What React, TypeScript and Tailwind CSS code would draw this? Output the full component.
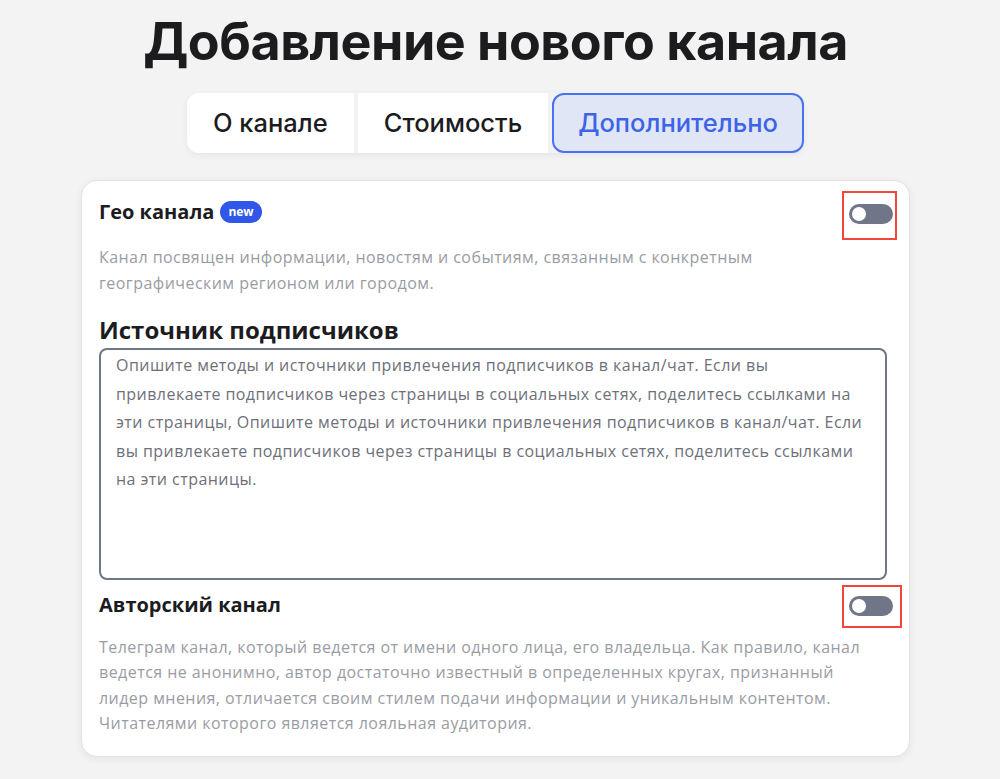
import React from "react";

// red outline around the switch is part of the screenshot, paddings differ per box
const Toggle: React.FC<{ pad: string }> = ({ pad }) => (
  <div className={`border-2 border-[#f0463c] ${pad}`}>
    <div className="w-[44px] h-[20px] rounded-full bg-[#6e7687] flex items-center px-[3px]">
      <div className="w-[14px] h-[14px] rounded-full bg-white" />
    </div>
  </div>
);

const tabs = [
  { label: "О канале", active: false },
  { label: "Стоимость", active: false },
  { label: "Дополнительно", active: true },
];

export default function App() {
  return (
    <div className="min-h-[779px] bg-[#f3f3f4] font-['Open_Sans',sans-serif] flex flex-col items-center pr-[9px]">
      <h1 className="mt-[10px] text-[52px] leading-[64px] font-bold tracking-[-0.5px] text-[#1c1c1f] font-['Inter',sans-serif]">
        Добавление нового канала
      </h1>

      <div className="mt-[19px] flex gap-[4px] rounded-[12px] shadow-[0_2px_6px_rgba(0,0,0,0.06)] font-['Inter',sans-serif]">
        {tabs.map((t, i) => (
          <div
            key={t.label}
            className={`h-[60px] flex items-center text-[25.5px] font-medium ${
              t.active
                ? "bg-[#e1e6f6] border-2 border-[#4a72f0] text-[#3d63e6] rounded-[12px] px-[24px]"
                : `bg-white text-[#1c1c1f] px-[26px] ${i === 0 ? "rounded-l-[12px]" : ""}`
            }`}
          >
            {t.label}
          </div>
        ))}
      </div>

      <div className="mt-[27px] w-[829px] bg-white border border-[#e3e3e6] rounded-[16px] shadow-[0_2px_8px_rgba(0,0,0,0.06)] pl-[17px] pr-[7px] pt-[10px] pb-[20px]">
        <div className="flex items-start justify-between">
          <div className="flex items-center gap-[6px] pt-[9px]">
            <span className="text-[20px] leading-[24px] font-bold text-[#1c1c1f]">Гео канала</span>
            <span className="bg-[#3157e8] text-white text-[12px] font-bold rounded-full px-[8px] leading-[22px]">new</span>
          </div>
          <div className="mr-[5px]">
            <Toggle pad="pl-[5px] pr-[2px] pt-[11px] pb-[14px]" />
          </div>
        </div>
        <p className="mt-[4px] w-[768px] text-[16px] leading-[26px] tracking-[0.45px] text-[#9a9ca4]">
          Канал посвящен информации, новостям и событиям, связанным с конкретным географическим регионом или городом.
        </p>

        <h2 className="mt-[19px] text-[24px] leading-[30px] font-bold text-[#1c1c1f]">Источник подписчиков</h2>
        <div className="mt-[3px] mr-[15px] h-[232px] border-2 border-[#6e7687] rounded-[8px] pl-[15px] pr-[14px] pt-[1px] text-[16px] leading-[28.5px] tracking-[0.45px] text-[#6e7079]">
          Опишите методы и источники привлечения подписчиков в канал/чат. Если вы привлекаете подписчиков через страницы в социальных сетях, поделитесь ссылками на эти страницы, Опишите методы и источники привлечения подписчиков в канал/чат. Если вы привлекаете подписчиков через страницы в социальных сетях, поделитесь ссылками на эти страницы.
        </div>

        <div className="mt-[5px] flex items-start justify-between">
          <span className="pt-[8px] text-[20px] leading-[24px] font-bold text-[#1c1c1f]">Авторский канал</span>
          <Toggle pad="pl-[5px] pr-[7px] pt-[9px] pb-[10px]" />
        </div>
        <p className="mt-[7px] w-[768px] text-[16px] leading-[25.3px] tracking-[0.45px] text-[#9a9ca4]">
          Телеграм канал, который ведется от имени одного лица, его владельца. Как правило, канал ведется не анонимно, автор достаточно известный в определенных кругах, признанный лидер мнения, отличается своим стилем подачи информации и уникальным контентом. Читателями которого является лояльная аудитория.
        </p>
      </div>
    </div>
  );
}
